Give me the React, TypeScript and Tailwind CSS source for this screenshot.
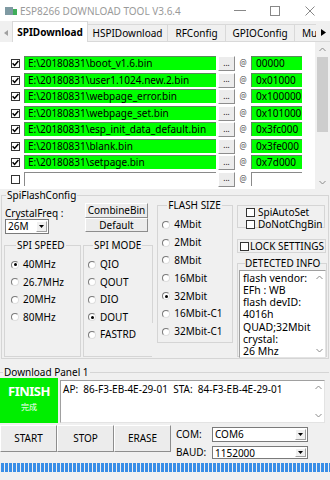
import React from "react";

const files: [string, string][] = [
  ["E:\\20180831\\boot_v1.6.bin", "00000"],
  ["E:\\20180831\\user1.1024.new.2.bin", "0x01000"],
  ["E:\\20180831\\webpage_error.bin", "0x100000"],
  ["E:\\20180831\\webpage_set.bin", "0x101000"],
  ["E:\\20180831\\esp_init_data_default.bin", "0x3fc000"],
  ["E:\\20180831\\blank.bin", "0x3fe000"],
  ["E:\\20180831\\setpage.bin", "0x7d000"],
];

const raised =
  "flex items-center justify-center bg-[#ececec] border border-t-white border-l-white border-r-[#8d8d8d] border-b-[#8d8d8d]";

function Check({ checked }: { checked?: boolean }) {
  return (
    <span className="flex w-[9px] h-[9px] shrink-0 items-center justify-center border border-[#333] bg-white">
      {checked && (
        <svg width="7" height="7" viewBox="0 0 7 7">
          <path d="M0.6 3.3 L2.6 5.4 L6.4 1.1" stroke="#000" strokeWidth="1.5" fill="none" />
        </svg>
      )}
    </span>
  );
}

function Radio({ checked }: { checked?: boolean }) {
  return (
    <span className="flex w-[8px] h-[8px] shrink-0 items-center justify-center rounded-full border border-t-[#7a7a7a] border-l-[#7a7a7a] border-r-[#dedede] border-b-[#dedede] bg-white">
      {checked && <span className="w-[3px] h-[3px] rounded-full bg-black" />}
    </span>
  );
}

function Arrow({ up }: { up?: boolean }) {
  return (
    <svg width="7" height="5" viewBox="0 0 7 5">
      <path d={up ? "M0.5 4 L3.5 1 L6.5 4" : "M0.5 1 L3.5 4 L6.5 1"} stroke="#8a8a8a" strokeWidth="1" fill="none" />
    </svg>
  );
}

function Combo({ text, cls }: { text: string; cls: string }) {
  return (
    <div className={"flex border border-[#7a7a7a] bg-white " + cls}>
      <span className="flex-1 pl-[2px] leading-[13px] text-[10px]">{text}</span>
      <span className="w-[11px] my-[1px] mr-[1px] flex items-center justify-center bg-[#f0f0f0] border border-t-white border-l-white border-r-[#a0a0a0] border-b-[#a0a0a0]">
        <svg width="5" height="3" viewBox="0 0 5 3">
          <path d="M0 0 L5 0 L2.5 3 Z" fill="#000" />
        </svg>
      </span>
    </div>
  );
}

function FileRow({ path, addr }: { path?: string; addr?: string }) {
  const filled = path !== undefined;
  return (
    <div className="flex h-[16.5px] items-start">
      <div className="w-[24px] flex justify-end pr-[4px] pt-[3px]">
        <Check checked={filled} />
      </div>
      <div
        className={
          "w-[192px] h-[14px] pl-[3px] leading-[13px] text-[10px] whitespace-nowrap overflow-hidden border-t border-l " +
          (filled ? "bg-[#00ff00] border-[#5a8a5a]" : "bg-white border-[#8a8a8a]")
        }
      >
        {path}
      </div>
      <div className={raised + " ml-[2px] w-[17px] h-[15px] text-[8px] leading-none pb-[2px]"}>...</div>
      <div className="w-[16px] text-center text-[8px] leading-[14px] text-[#555]">@</div>
      <div
        className={
          "w-[51px] h-[14px] pl-[4px] leading-[13px] text-[10px] border-t border-l " +
          (filled ? "bg-[#00ff00] border-[#5a8a5a]" : "bg-white border-[#8a8a8a]")
        }
      >
        {addr}
      </div>
    </div>
  );
}

export default function App() {
  return (
    <div className="w-[330px] h-[480px] bg-[#f0f0f0] overflow-hidden font-['Noto_Sans','Noto_Sans_CJK_SC',sans-serif] text-[10px] text-black">
      {/* Title bar */}
      <div className="h-[21px] bg-white flex items-center">
        <svg className="ml-[5px]" width="12" height="10" viewBox="0 0 12 10">
          <rect x="0" y="1" width="8" height="8" fill="#7f9aa3" />
          <rect x="8" y="3" width="4" height="6" fill="#3fae5a" />
        </svg>
        <span className="ml-[3px] text-[10px] text-[#9a9a9a] leading-none">ESP8266 DOWNLOAD TOOL V3.6.4</span>
        <div className="ml-auto flex items-center text-[#777]">
          <span className="w-[12px] h-px bg-[#888] mr-[24px]" />
          <span className="w-[10px] h-[10px] border border-[#888] mr-[25px]" />
          <svg className="mr-[15px]" width="10" height="10" viewBox="0 0 10 10">
            <path d="M0.5 0.5 L9.5 9.5 M9.5 0.5 L0.5 9.5" stroke="#888" strokeWidth="1" />
          </svg>
        </div>
      </div>

      {/* Tabs */}
      <div className="h-[21px] flex items-end">
        <div className="w-[12px] h-[18px] flex items-center justify-center">
          <svg width="4" height="6" viewBox="0 0 4 6">
            <path d="M4 0 L0 3 L4 6 Z" fill="#a0a0a0" />
          </svg>
        </div>
        <div className="w-[76px] h-[21px] bg-white border border-b-0 border-[#d9d9d9] flex items-center justify-center font-bold">
          SPIDownload
        </div>
        <div className="w-[80px] h-[18px] border border-l-0 border-[#d9d9d9] flex items-center justify-center">HSPIDownload</div>
        <div className="w-[58px] h-[18px] border border-l-0 border-[#d9d9d9] flex items-center justify-center">RFConfig</div>
        <div className="w-[69px] h-[18px] border border-l-0 border-[#d9d9d9] flex items-center justify-center">GPIOConfig</div>
        <div className="w-[21px] h-[18px] border border-l-0 border-r-0 border-[#d9d9d9] overflow-hidden pl-[7px] flex items-center whitespace-nowrap">
          Mu
        </div>
        <div className="w-[14px] h-[18px] flex items-center justify-center border-b border-[#d9d9d9]">
          <svg width="5" height="7" viewBox="0 0 5 7">
            <path d="M0 0 L5 3.5 L0 7 Z" fill="#000" />
          </svg>
        </div>
      </div>

      {/* File panel */}
      <div className="h-[147px] bg-white flex">
        <div className="w-[315px] pt-[14px]">
          {files.map(([p, a]) => (
            <FileRow key={p} path={p} addr={a} />
          ))}
          <FileRow />
        </div>
        <div className="w-[15px] flex flex-col items-center bg-[#f0f0f0]">
          <div className="h-[14px] flex items-center justify-center">
            <Arrow up />
          </div>
          <div className="mt-[1px] w-[11px] h-[75px] bg-[#cdcdcd]" />
          <div className="mt-auto h-[14px] flex items-center justify-center">
            <Arrow />
          </div>
        </div>
      </div>

      {/* SpiFlashConfig */}
      <fieldset className="ml-[1px] w-[328px] h-[170px] min-w-0 border border-[#d5d5d5] px-[1px] pb-[1px]">
        <legend className="ml-[3px] px-[1px] leading-[12px]">SpiFlashConfig</legend>
        <div className="flex h-full">
          {/* Col 1 */}
          <div className="w-[152px] flex flex-col">
            <div className="h-[38px] flex">
              <div className="w-[82px]">
                <div className="mt-[6px] pl-[2px] leading-[12px]">CrystalFreq :</div>
                <Combo text="26M" cls="ml-[2px] w-[44px] h-[15px]" />
              </div>
              <div className="w-[63px] pt-[2px]">
                <div className={raised + " h-[15px]"}>CombineBin</div>
                <div className={raised + " h-[14px]"}>Default</div>
              </div>
            </div>
            <div className="flex flex-1">
              <fieldset className="ml-[1px] w-[77px] h-full min-w-0 border border-[#d5d5d5] pl-[6px] pt-[5px]">
                <legend className="ml-[5px] px-[1px] leading-[12px]">SPI SPEED</legend>
                {[
                  ["40MHz", true],
                  ["26.7MHz", false],
                  ["20MHz", false],
                  ["80MHz", false],
                ].map(([t, c]) => (
                  <div key={t as string} className="h-[17.5px] flex items-center gap-[4px]">
                    <Radio checked={c as boolean} />
                    <span>{t as string}</span>
                  </div>
                ))}
              </fieldset>
              <fieldset className="ml-[2px] w-[69px] h-full min-w-0 border border-r-0 border-[#d5d5d5] pl-[4px] pt-[5px]">
                <legend className="ml-[5px] px-[1px] leading-[12px]">SPI MODE</legend>
                {[
                  ["QIO", false],
                  ["QOUT", false],
                  ["DIO", false],
                  ["DOUT", true],
                  ["FASTRD", false],
                ].map(([t, c]) => (
                  <div key={t as string} className="h-[17.5px] flex items-center gap-[4px]">
                    <Radio checked={c as boolean} />
                    <span>{t as string}</span>
                  </div>
                ))}
              </fieldset>
              <div className="mt-[6px] w-px h-[78px] bg-[#d5d5d5]" />
            </div>
          </div>

          {/* Col 2 */}
          <fieldset className="ml-[3px] -mt-[2px] w-[76px] h-[144px] min-w-0 border border-[#d5d5d5] pl-[4px] pt-[5px]">
            <legend className="ml-[5px] px-[1px] leading-[12px]">FLASH SIZE</legend>
            {[
              ["4Mbit", false],
              ["2Mbit", false],
              ["8Mbit", false],
              ["16Mbit", false],
              ["32Mbit", true],
              ["16Mbit-C1", false],
              ["32Mbit-C1", false],
            ].map(([t, c]) => (
              <div key={t as string} className="h-[17.8px] flex items-center gap-[4px]">
                <Radio checked={c as boolean} />
                <span>{t as string}</span>
              </div>
            ))}
          </fieldset>

          {/* Col 3 */}
          <div className="ml-[4px] w-[90px] flex flex-col">
            <div className="mt-[4px] w-[88px] h-[23px] shrink-0 border border-[#d5d5d5] pl-[8px]">
              <div className="h-[12px] flex items-center gap-[3px] leading-[12px]">
                <Check />
                <span>SpiAutoSet</span>
              </div>
              <div className="h-[12px] flex items-center gap-[3px] leading-[12px]">
                <Check />
                <span>DoNotChgBin</span>
              </div>
            </div>
            <div className="mt-[11px] w-[89px] h-[14px] border border-[#d5d5d5] pl-[2px] flex items-center gap-[1px]">
              <Check />
              <span>LOCK SETTINGS</span>
            </div>
            <fieldset className="mt-[4px] flex-1 min-w-0 min-h-0 border border-[#d5d5d5] flex flex-col">
              <legend className="ml-[7px] leading-[12px]">DETECTED INFO</legend>
              <div className="mt-[1px] ml-[1px] w-[87px] h-[88px] bg-white border border-t-[#a0a0a0] border-l-[#a0a0a0] border-r-[#e3e3e3] border-b-[#e3e3e3] flex">
                <div className="flex-1 pl-[3px] pt-[0.5px] text-[10.5px] leading-[12.3px] whitespace-nowrap overflow-hidden">
                  <div>flash vendor:</div>
                  <div>EFh : WB</div>
                  <div>flash devID:</div>
                  <div>4016h</div>
                  <div>QUAD;32Mbit</div>
                  <div>crystal:</div>
                  <div>26 Mhz</div>
                </div>
                <div className="w-[11px] flex flex-col items-center justify-between py-[4px]">
                  <Arrow up />
                  <Arrow />
                </div>
              </div>
            </fieldset>
          </div>
        </div>
      </fieldset>

      {/* Download Panel 1 */}
      <fieldset className="mt-[7px] w-[329px] min-w-0 border-t border-[#d5d5d5]">
        <legend className="ml-[3px] px-[1px] leading-[12px]">Download Panel 1</legend>
        <div className="h-[45px] flex">
          <div className="w-[58px] h-full bg-[#00ee00] flex flex-col items-center pt-[6px] text-white">
            <span className="text-[13px] font-bold leading-[15px] tracking-[-0.5px]">FINISH</span>
            <span className="mt-[2px] text-[8px] leading-[11px]">完成</span>
          </div>
          <div className="ml-[2px] mt-[2px] w-[265px] h-[43px] bg-white border border-t-[#a0a0a0] border-l-[#a0a0a0] border-r-[#e3e3e3] border-b-[#e3e3e3] flex">
            <div className="flex-1 pl-[2px] pt-[2px] leading-[12px] whitespace-pre">AP:  86-F3-EB-4E-29-01  STA:  84-F3-EB-4E-29-01</div>
            <div className="w-[11px] flex flex-col items-center justify-between py-[4px]">
              <Arrow up />
              <Arrow />
            </div>
          </div>
        </div>
        <div className="mt-[2px] h-[34px] flex">
          <div className={raised + " w-[57px] h-[27px]"}>START</div>
          <div className={raised + " w-[57px] h-[27px]"}>STOP</div>
          <div className={raised + " w-[57px] h-[27px]"}>ERASE</div>
          <div className="ml-[5px] flex flex-col">
            <div className="mt-[2px] h-[15px] flex items-center">
              <span className="w-[36px]">COM:</span>
              <Combo text="COM6" cls="w-[96px] h-[15px]" />
            </div>
            <div className="mt-[4px] h-[13px] flex items-center">
              <span className="w-[36px]">BAUD:</span>
              <Combo text="1152000" cls="w-[96px] h-[13px]" />
            </div>
          </div>
        </div>
      </fieldset>

      {/* Progress */}
      <div className="mt-[4px] h-[9px] pl-[1px] flex gap-[1px] overflow-hidden">
        {Array.from({ length: 83 }).map((_, i) => (
          <div key={i} className="w-[3px] h-full shrink-0 bg-[#3a8ee6]" />
        ))}
      </div>
    </div>
  );
}
